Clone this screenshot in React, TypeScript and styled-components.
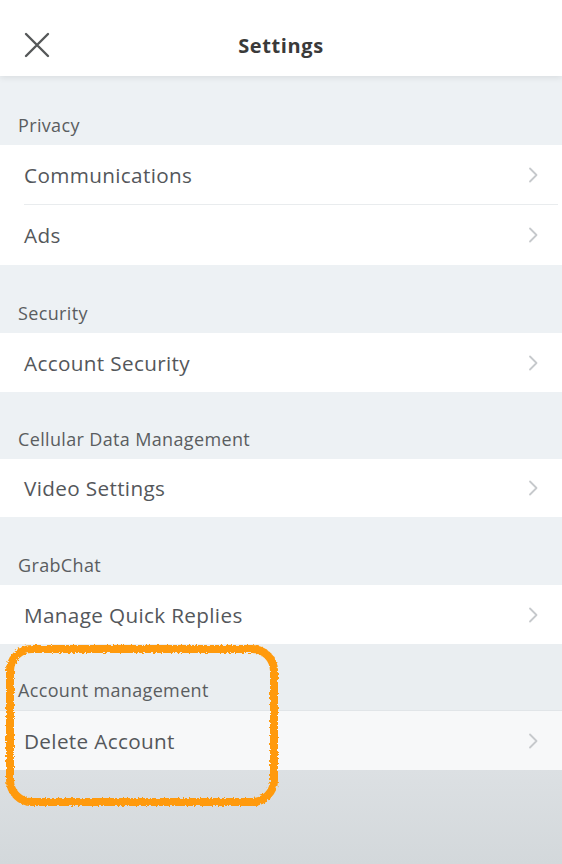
import React from "react";
import styled, { createGlobalStyle } from "styled-components";

const Global = createGlobalStyle`
  html, body { margin: 0; padding: 0; }
  body { font-family: "Open Sans", "Noto Sans", sans-serif; background: #edf1f4; }
  * { box-sizing: border-box; }
`;

const Page = styled.div`
  position: relative;
  width: 562px;
  height: 864px;
  display: flex;
  flex-direction: column;
  background: #edf1f4;
  overflow: hidden;
`;

const Header = styled.header`
  position: relative;
  z-index: 2;
  height: 76px;
  flex: none;
  display: grid;
  grid-template-columns: 80px 1fr 80px;
  align-items: center;
  padding-top: 14px;
  background: #ffffff;
  box-shadow: 0 2px 6px rgba(0, 0, 0, 0.08);
`;

const CloseButton = styled.button`
  width: 40px;
  height: 40px;
  margin-left: 17px;
  border: none;
  background: transparent;
  padding: 0;
  display: flex;
  align-items: center;
  justify-content: center;
`;

const Title = styled.h1`
  margin: 0;
  text-align: center;
  font-size: 20px;
  font-weight: 700;
  color: #3a3a3a;
  letter-spacing: 0.6px;
`;

const SectionLabel = styled.div<{ $h: number; $tone?: "dim" }>`
  height: ${(p) => p.$h}px;
  flex: none;
  display: flex;
  align-items: flex-end;
  padding: 0 0 8px 18px;
  font-size: 18px;
  letter-spacing: 0.35px;
  color: #5a5d60;
  background: ${(p) => (p.$tone ? "#eaeef1" : "transparent")};
`;

const Group = styled.div<{ $tone?: "dim" }>`
  flex: none;
  background: ${(p) => (p.$tone ? "#f7f8f9" : "#ffffff")};
  border-top: ${(p) => (p.$tone ? "1px solid #e1e5e8" : "none")};
`;

const Row = styled.div<{ $h: number; $divider?: boolean }>`
  position: relative;
  height: ${(p) => p.$h}px;
  display: flex;
  align-items: center;
  justify-content: space-between;
  padding: 0 22px 0 24px;
  font-size: 20.7px;
  letter-spacing: 0.35px;
  color: #54575b;
  ${(p) =>
    p.$divider
      ? `&::after { content: ""; position: absolute; left: 24px; right: 4px; bottom: 0; height: 1px; background: #e9ecee; }`
      : ""}
`;

const Footer = styled.div`
  flex: 1;
  background: linear-gradient(#dce0e3, #d3d8db);
`;

const Highlight = styled.svg`
  position: absolute;
  left: 0;
  top: 638px;
  width: 290px;
  height: 178px;
  pointer-events: none;
  z-index: 3;
`;

const Chevron = () => (
  <svg width="14" height="18" viewBox="0 0 14 18" fill="none">
    <path d="M4 2.5 L10.5 9 L4 15.5" stroke="#c6c9cc" strokeWidth="1.8" strokeLinecap="round" strokeLinejoin="round" />
  </svg>
);

const CloseIcon = () => (
  <svg width="26" height="26" viewBox="0 0 26 26" fill="none">
    <path d="M2 2 L24 24 M24 2 L2 24" stroke="#555859" strokeWidth="2.4" strokeLinecap="round" />
  </svg>
);

type Section = { label: string; labelH: number; rowH: number; items: string[]; tone?: "dim" };

const sections: Section[] = [
  { label: "Privacy", labelH: 69, rowH: 60, items: ["Communications", "Ads"] },
  { label: "Security", labelH: 68, rowH: 59, items: ["Account Security"] },
  { label: "Cellular Data Management", labelH: 67, rowH: 58, items: ["Video Settings"] },
  { label: "GrabChat", labelH: 68, rowH: 59, items: ["Manage Quick Replies"] },
  { label: "Account management", labelH: 66, rowH: 59, items: ["Delete Account"], tone: "dim" },
];

export default function App() {
  return (
    <>
      <Global />
      <Page>
        <Header>
          <CloseButton aria-label="Close">
            <CloseIcon />
          </CloseButton>
          <Title>Settings</Title>
          <div />
        </Header>
        {sections.map((s) => (
          <React.Fragment key={s.label}>
            <SectionLabel $h={s.labelH} $tone={s.tone}>
              {s.label}
            </SectionLabel>
            <Group $tone={s.tone}>
              {s.items.map((it, i) => (
                <Row key={it} $h={s.rowH} $divider={i < s.items.length - 1}>
                  <span>{it}</span>
                  <Chevron />
                </Row>
              ))}
            </Group>
          </React.Fragment>
        ))}
        <Footer />
        <Highlight viewBox="0 0 290 178">
          <defs>
            <filter id="rough" x="-5%" y="-5%" width="110%" height="110%">
              <feTurbulence type="fractalNoise" baseFrequency="0.45" numOctaves="2" seed="3" result="n" />
              <feDisplacementMap in="SourceGraphic" in2="n" scale="4" />
            </filter>
          </defs>
          <rect
            x="10"
            y="11"
            width="264"
            height="153"
            rx="22"
            fill="none"
            stroke="#ff9a0a"
            strokeWidth="8"
            filter="url(#rough)"
          />
        </Highlight>
      </Page>
    </>
  );
}
